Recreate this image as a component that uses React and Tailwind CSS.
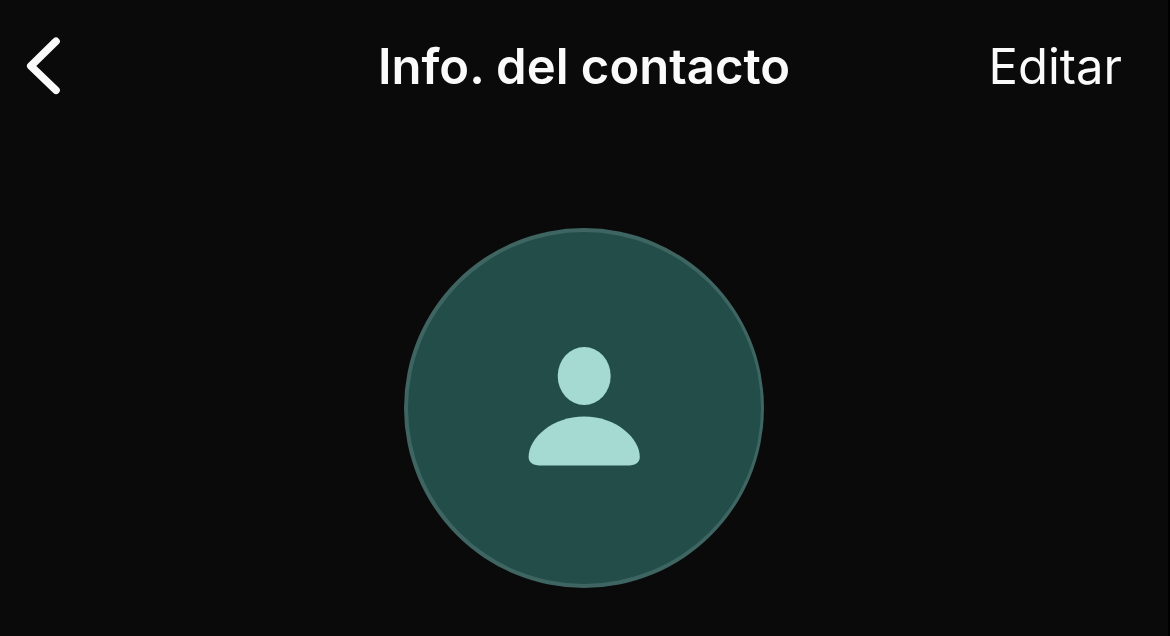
export default function App() {
  return (
    <div className="min-h-screen border-r-2 border-black bg-[#0a0a0a] font-['Inter',sans-serif] text-[#fafafa]">
      <header className="grid grid-cols-[1fr_auto_1fr] items-center px-6 pt-8">
        <button type="button" aria-label="Atrás" className="justify-self-start">
          <svg className="block h-[70px] w-10" viewBox="0 0 40 70" fill="none" stroke="currentColor" strokeWidth="7.6" strokeLinecap="round" strokeLinejoin="round">
            <path d="M32 9.3 L6.8 34 L32 58.3" />
          </svg>
        </button>
        <h1 className="text-[49px] leading-[70px] font-semibold">Info. del contacto</h1>
        <button type="button" className="justify-self-end pr-[22px] text-[49px] leading-[70px]">Editar</button>
      </header>
      <main className="flex justify-center pt-[126px]">
        <div className="flex size-[360px] items-center justify-center rounded-full border-y-4 border-r-3 border-l-4 border-[#3e6561] bg-[#234d49]">
          <svg className="h-[124px] w-[120px]" viewBox="-4 0 120 124" fill="#a5dad2" aria-hidden="true">
            <ellipse cx="55.2" cy="30" rx="26.5" ry="29" />
            <path d="M55.2 70.5 C87 70.5 110.8 92 110.8 111 C110.8 117 106 119.5 98 119.5 H12.4 C4.4 119.5 -0.4 117 -0.4 111 C-0.4 92 23.4 70.5 55.2 70.5 Z" />
          </svg>
        </div>
      </main>
    </div>
  )
}
